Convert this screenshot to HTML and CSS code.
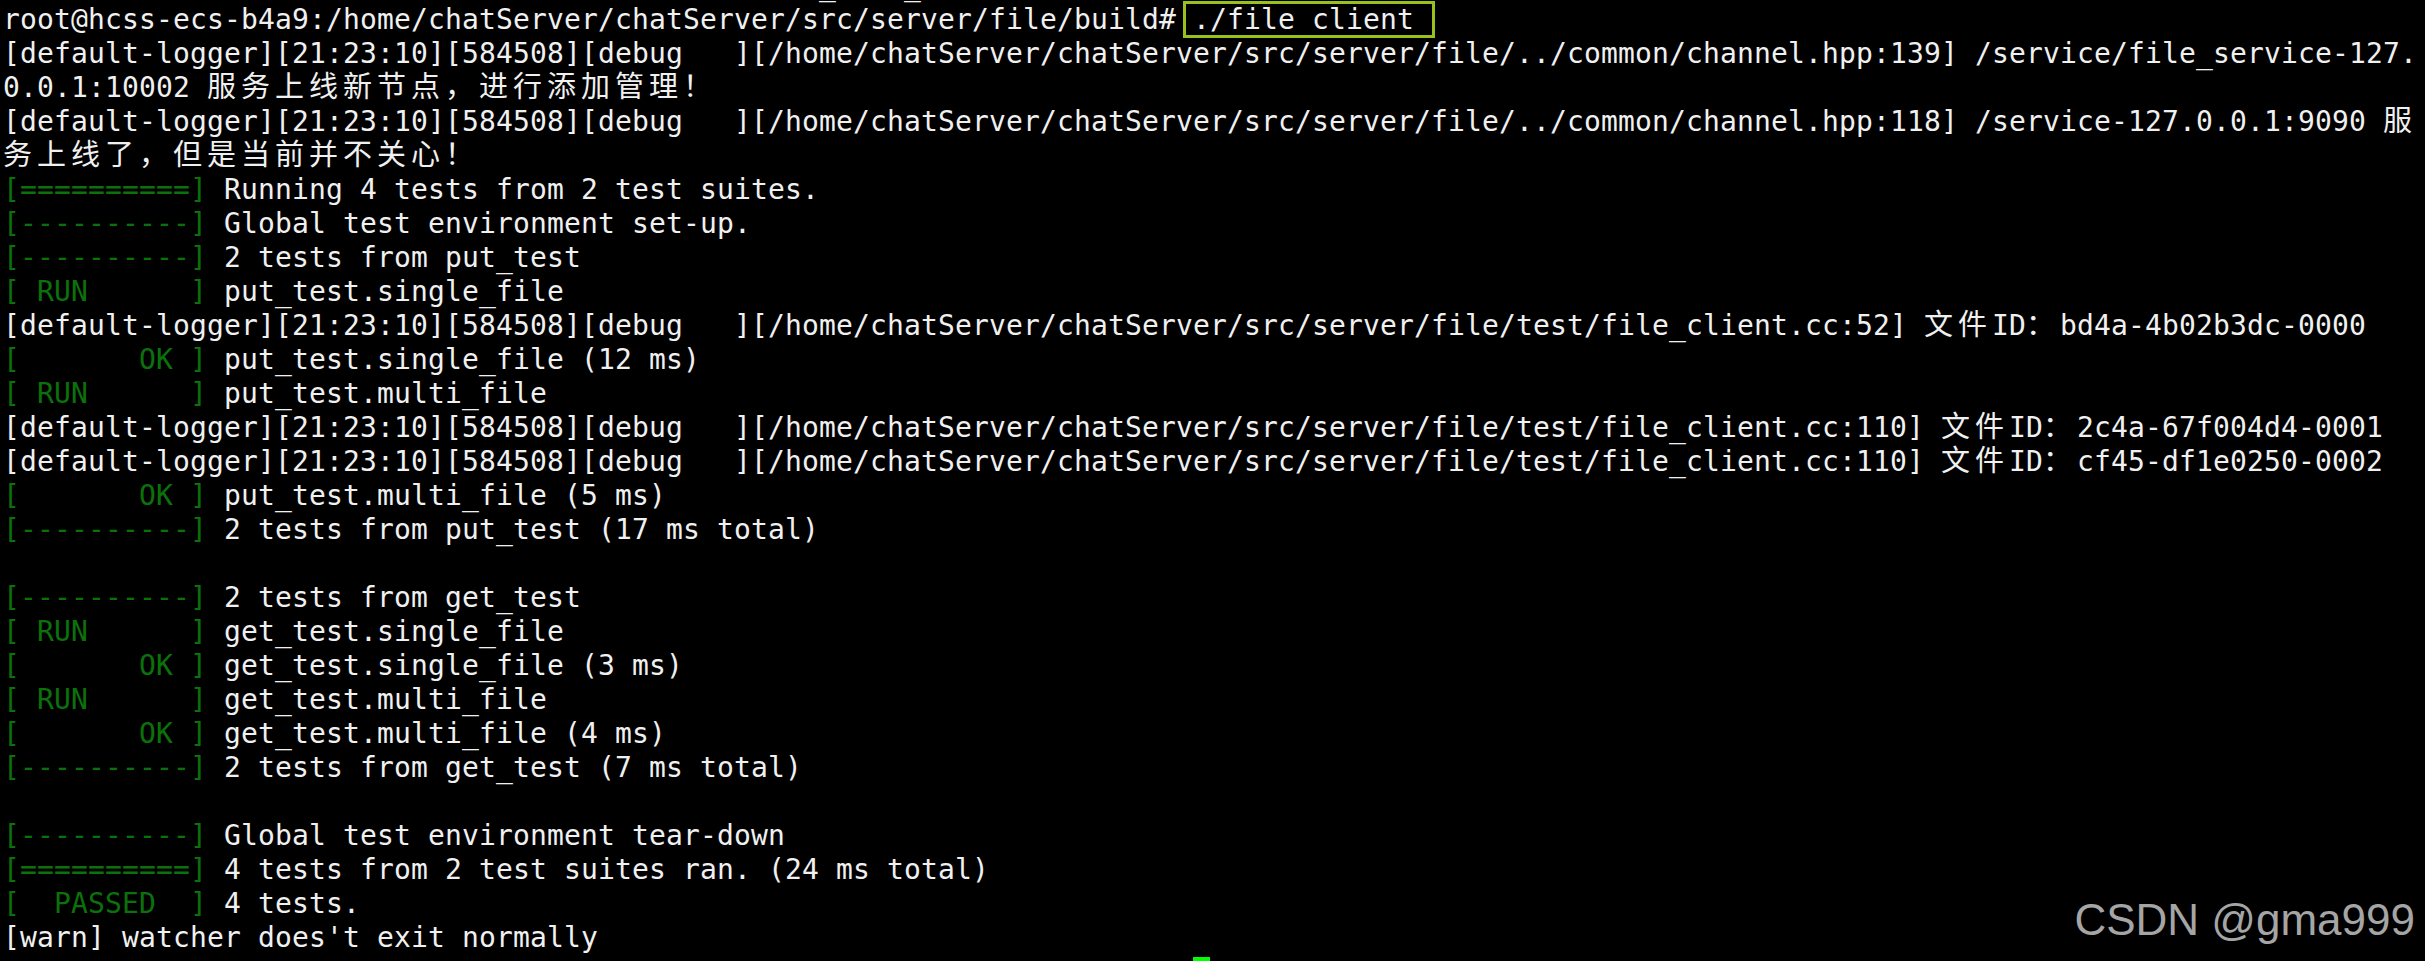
FILE: index.html
```html
<!DOCTYPE html>
<html lang="zh-CN">
<head>
<meta charset="utf-8">
<title>file client test</title>
<link rel="stylesheet" href="styles.css">
</head>
<body>
<div class="term">
<div class="ln ghost">                                                _    _</div>
<div class="ln">root@hcss-ecs-b4a9:/home/chatServer/chatServer/src/server/file/build# <span class="cmd">./file client</span></div>
<div class="ln">[default-logger][21:23:10][584508][debug   ][/home/chatServer/chatServer/src/server/file/../common/channel.hpp:139] /service/file_service-127.</div>
<div class="ln">0.0.1:10002 <span class="c">服务上线新节点，进行添加管理！</span></div>
<div class="ln">[default-logger][21:23:10][584508][debug   ][/home/chatServer/chatServer/src/server/file/../common/channel.hpp:118] /service-127.0.0.1:9090 <span class="c">服</span></div>
<div class="ln"><span class="c">务上线了，但是当前并不关心！</span></div>
<div class="ln"><span class="g">[==========]</span> Running 4 tests from 2 test suites.</div>
<div class="ln"><span class="g">[----------]</span> Global test environment set-up.</div>
<div class="ln"><span class="g">[----------]</span> 2 tests from put_test</div>
<div class="ln"><span class="g">[ RUN      ]</span> put_test.single_file</div>
<div class="ln">[default-logger][21:23:10][584508][debug   ][/home/chatServer/chatServer/src/server/file/test/file_client.cc:52] <span class="c">文件</span>ID<span class="c">：</span>bd4a-4b02b3dc-0000</div>
<div class="ln"><span class="g">[       OK ]</span> put_test.single_file (12 ms)</div>
<div class="ln"><span class="g">[ RUN      ]</span> put_test.multi_file</div>
<div class="ln">[default-logger][21:23:10][584508][debug   ][/home/chatServer/chatServer/src/server/file/test/file_client.cc:110] <span class="c">文件</span>ID<span class="c">：</span>2c4a-67f004d4-0001</div>
<div class="ln">[default-logger][21:23:10][584508][debug   ][/home/chatServer/chatServer/src/server/file/test/file_client.cc:110] <span class="c">文件</span>ID<span class="c">：</span>cf45-df1e0250-0002</div>
<div class="ln"><span class="g">[       OK ]</span> put_test.multi_file (5 ms)</div>
<div class="ln"><span class="g">[----------]</span> 2 tests from put_test (17 ms total)</div>
<div class="ln"></div>
<div class="ln"><span class="g">[----------]</span> 2 tests from get_test</div>
<div class="ln"><span class="g">[ RUN      ]</span> get_test.single_file</div>
<div class="ln"><span class="g">[       OK ]</span> get_test.single_file (3 ms)</div>
<div class="ln"><span class="g">[ RUN      ]</span> get_test.multi_file</div>
<div class="ln"><span class="g">[       OK ]</span> get_test.multi_file (4 ms)</div>
<div class="ln"><span class="g">[----------]</span> 2 tests from get_test (7 ms total)</div>
<div class="ln"></div>
<div class="ln"><span class="g">[----------]</span> Global test environment tear-down</div>
<div class="ln"><span class="g">[==========]</span> 4 tests from 2 test suites ran. (24 ms total)</div>
<div class="ln"><span class="g">[  PASSED  ]</span> 4 tests.</div>
<div class="ln">[warn] watcher does't exit normally</div>
<div class="ln">                                                                      <span class="cur"></span></div>
</div>
<div class="mark">CSDN @gma999</div>
</body>
</html>
```
FILE: styles.css
```css
html, body {
  margin: 0;
  padding: 0;
  background: #000;
}
body {
  width: 2425px;
  height: 961px;
  overflow: hidden;
  position: relative;
}
.term {
  margin-top: -31px;
  padding-left: 3px;
  font-family: "DejaVu Sans Mono", monospace;
  font-size: 28px;
  letter-spacing: 0.143px;
  line-height: 34px;
  color: #f0f0f0;
}
.ln {
  height: 34px;
  white-space: pre;
}
.g {
  color: #0b720b;
}
.c {
  font-family: "Noto Sans CJK SC", "Noto Sans CJK JP", sans-serif;
  font-size: 29px;
  letter-spacing: 5px;
  line-height: 20px;
}
.cmd {
  display: inline-block;
  position: relative;
}
.cmd::after {
  content: "";
  position: absolute;
  top: -2px;
  bottom: -1px;
  left: -10px;
  right: -21px;
  border: 3px solid #98c21b;
}
.cur {
  display: inline-block;
  vertical-align: top;
  width: 17px;
  height: 30px;
  margin-top: 2px;
  background: #00ff00;
}
.mark {
  position: absolute;
  right: 10px;
  top: 898px;
  font-family: "Liberation Sans", Arial, sans-serif;
  font-size: 44px;
  line-height: 44px;
  color: #a5a5a5;
}
```
